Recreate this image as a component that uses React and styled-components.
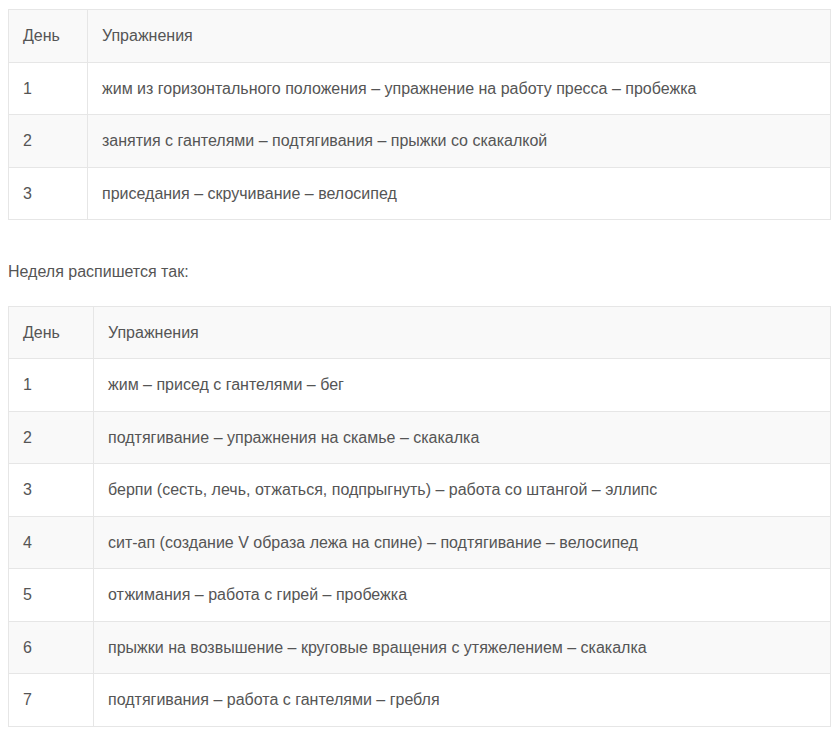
import React from "react";
import styled, { createGlobalStyle } from "styled-components";

const GlobalStyle = createGlobalStyle`
  html, body {
    margin: 0;
    padding: 0;
    background: #fff;
  }
  body {
    font-family: "Liberation Sans", Arial, sans-serif;
    font-size: 16px;
    line-height: 21.5px;
    color: #555;
  }
`;

const Page = styled.div`
  padding: 9px 9px 0 8px;
`;

const Table = styled.table`
  width: 100%;
  border-collapse: collapse;
  border: 1px solid #e6e6e6;
  margin: 0 0 41px;

  th,
  td {
    text-align: left;
    font-weight: normal;
    padding: 15px 14px;
    border: 1px solid #e6e6e6;
    vertical-align: middle;
  }

  th:first-child,
  td:first-child {
    width: ${(p) => p.$firstCol}px;
    box-sizing: border-box;
  }

  thead tr {
    background: #f9f9f9;
  }

  tbody tr:nth-child(even) {
    background: #f9f9f9;
  }
`;

const Note = styled.p`
  margin: 0 0 23px;
`;

const firstWeek = [
  "жим из горизонтального положения – упражнение на работу пресса – пробежка",
  "занятия с гантелями – подтягивания – прыжки со скакалкой",
  "приседания – скручивание – велосипед",
];

const secondWeek = [
  "жим – присед с гантелями – бег",
  "подтягивание – упражнения на скамье – скакалка",
  "берпи (сесть, лечь, отжаться, подпрыгнуть) – работа со штангой – эллипс",
  "сит-ап (создание V образа лежа на спине) – подтягивание – велосипед",
  "отжимания – работа с гирей – пробежка",
  "прыжки на возвышение – круговые вращения с утяжелением – скакалка",
  "подтягивания – работа с гантелями – гребля",
];

function Schedule({ rows, firstCol }) {
  return (
    <Table $firstCol={firstCol}>
      <thead>
        <tr>
          <th>День</th>
          <th>Упражнения</th>
        </tr>
      </thead>
      <tbody>
        {rows.map((text, i) => (
          <tr key={i}>
            <td>{i + 1}</td>
            <td>{text}</td>
          </tr>
        ))}
      </tbody>
    </Table>
  );
}

export default function App() {
  return (
    <>
      <GlobalStyle />
      <Page>
        <Schedule rows={firstWeek} firstCol={79} />
        <Note>Неделя распишется так:</Note>
        <Schedule rows={secondWeek} firstCol={85} />
      </Page>
    </>
  );
}
